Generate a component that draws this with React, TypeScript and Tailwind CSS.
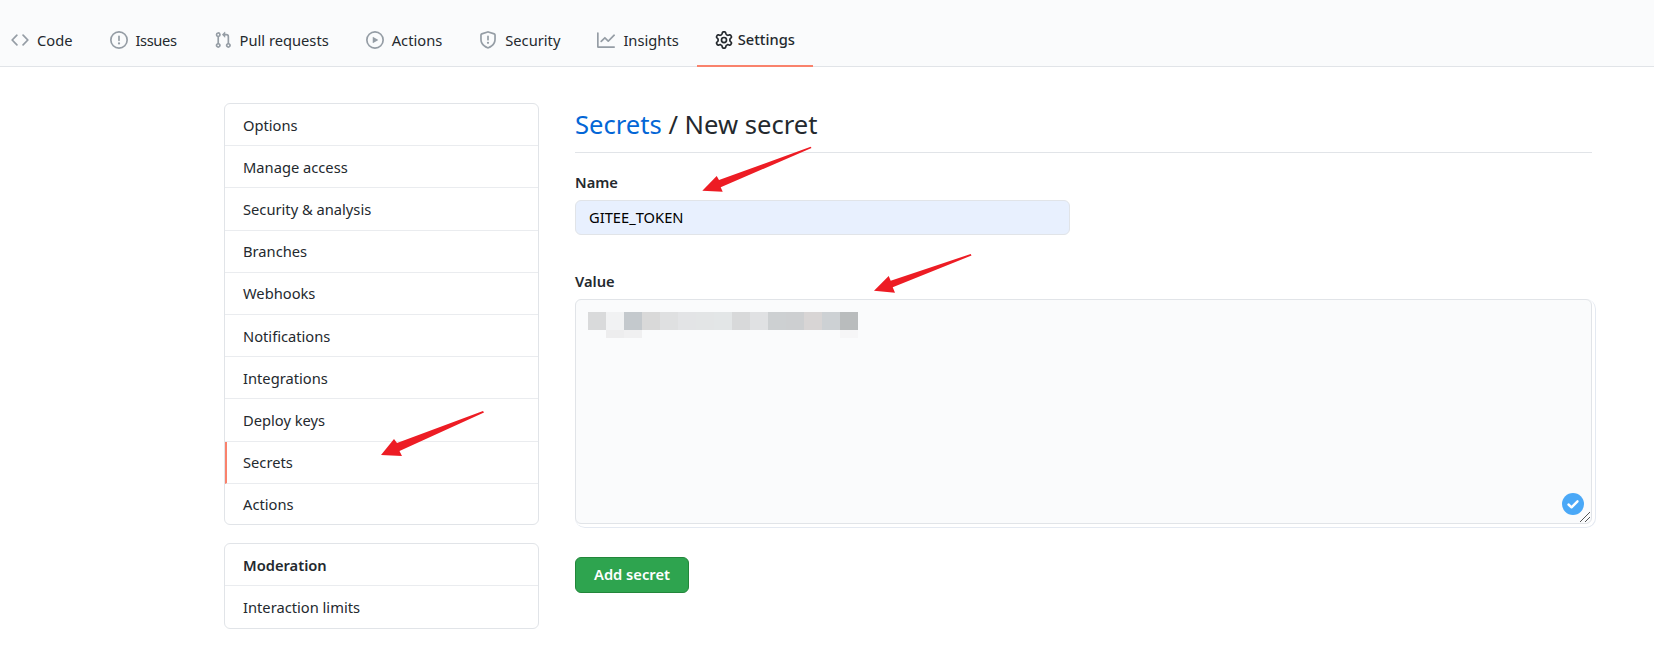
import React from 'react';

const icons: Record<string, string> = {
  code: 'M4.72 3.22a.75.75 0 011.06 1.06L2.06 8l3.72 3.72a.75.75 0 11-1.06 1.06L.47 8.53a.75.75 0 010-1.06l4.25-4.25zm6.56 0a.75.75 0 10-1.06 1.06L13.94 8l-3.72 3.72a.75.75 0 101.06 1.06l4.25-4.25a.75.75 0 000-1.06l-4.25-4.25z',
  issue: 'M8 1.5a6.5 6.5 0 100 13 6.5 6.5 0 000-13zM0 8a8 8 0 1116 0A8 8 0 010 8zm9 3a1 1 0 11-2 0 1 1 0 012 0zm-.25-6.25a.75.75 0 00-1.5 0v3.5a.75.75 0 001.5 0v-3.5z',
  pull: 'M7.177 3.073L9.573.677A.25.25 0 0110 .854v4.792a.25.25 0 01-.427.177L7.177 3.427a.25.25 0 010-.354zM3.75 2.5a.75.75 0 100 1.5.75.75 0 000-1.5zm-2.25.75a2.25 2.25 0 113 2.122v5.256a2.251 2.251 0 11-1.5 0V5.372A2.25 2.25 0 011.5 3.25zM11 2.5h-1V4h1a1 1 0 011 1v5.628a2.251 2.251 0 101.5 0V5A2.5 2.5 0 0011 2.5zm1 10.25a.75.75 0 111.5 0 .75.75 0 01-1.5 0zM3.75 12a.75.75 0 100 1.5.75.75 0 000-1.5z',
  play: 'M1.5 8a6.5 6.5 0 1113 0 6.5 6.5 0 01-13 0zM8 0a8 8 0 100 16A8 8 0 008 0zM6.379 5.227A.25.25 0 006 5.442v5.117a.25.25 0 00.379.214l4.264-2.559a.25.25 0 000-.428L6.379 5.227z',
  shield: 'M7.467.133a1.75 1.75 0 011.066 0l5.25 1.68A1.75 1.75 0 0115 3.48V7c0 1.566-.32 3.182-1.303 4.682-.983 1.498-2.585 2.813-5.032 3.855a1.7 1.7 0 01-1.33 0c-2.447-1.042-4.049-2.357-5.032-3.855C1.32 10.182 1 8.566 1 7V3.48a1.75 1.75 0 011.217-1.667l5.25-1.68zm.61 1.429a.25.25 0 00-.153 0l-5.25 1.68a.25.25 0 00-.174.238V7c0 1.358.275 2.666 1.057 3.86.784 1.194 2.121 2.34 4.366 3.297a.2.2 0 00.154 0c2.245-.956 3.582-2.104 4.366-3.298C13.225 9.666 13.5 8.36 13.5 7V3.48a.25.25 0 00-.174-.237l-5.25-1.68zM9 10.5a1 1 0 11-2 0 1 1 0 012 0zm-.25-5.75a.75.75 0 10-1.5 0v3a.75.75 0 001.5 0v-3z',
  graph: 'M1.5 1.75a.75.75 0 00-1.5 0v12.5c0 .414.336.75.75.75h14.5a.75.75 0 000-1.5H1.5V1.75zm14.28 2.53a.75.75 0 00-1.06-1.06L10 7.94 7.53 5.47a.75.75 0 00-1.06 0L3.22 8.72a.75.75 0 001.06 1.06L7 7.06l2.47 2.47a.75.75 0 001.06 0l5.25-5.25z',
  gear: 'M7.429 1.525a6.593 6.593 0 011.142 0c.036.003.108.036.137.146l.289 1.105c.147.56.55.967.997 1.189.174.086.341.183.501.29.417.278.97.423 1.53.27l1.102-.303c.11-.03.175.016.195.046.219.31.41.641.573.989.014.031.022.11-.059.19l-.815.806c-.411.406-.562.957-.53 1.456a4.588 4.588 0 010 .582c-.032.499.119 1.05.53 1.456l.815.806c.08.08.073.159.059.19a6.494 6.494 0 01-.573.99c-.02.029-.086.074-.195.045l-1.103-.303c-.559-.153-1.112-.008-1.529.27-.16.107-.327.204-.5.29-.449.222-.851.628-.998 1.189l-.289 1.105c-.029.11-.101.143-.137.146a6.613 6.613 0 01-1.142 0c-.036-.003-.108-.037-.137-.146l-.289-1.105c-.147-.56-.55-.967-.997-1.189a4.502 4.502 0 01-.501-.29c-.417-.278-.97-.423-1.53-.27l-1.102.303c-.11.03-.175-.016-.195-.046a6.492 6.492 0 01-.573-.989c-.014-.031-.022-.11.059-.19l.815-.806c.411-.406.562-.957.53-1.456a4.587 4.587 0 010-.582c.032-.499-.119-1.05-.53-1.456l-.815-.806c-.08-.08-.073-.159-.059-.19a6.44 6.44 0 01.573-.99c.02-.029.086-.075.195-.045l1.103.303c.559.153 1.112.008 1.529-.27.16-.107.327-.204.5-.29.449-.222.851-.628.998-1.189l.289-1.105c.029-.11.101-.143.137-.146zM8 0c-.236 0-.47.01-.701.03-.743.065-1.29.615-1.458 1.261l-.29 1.106c-.017.066-.078.158-.211.224a5.994 5.994 0 00-.668.386c-.123.082-.233.09-.3.071L3.27 2.776c-.644-.177-1.392.02-1.82.63a7.977 7.977 0 00-.704 1.217c-.315.675-.111 1.422.363 1.891l.815.806c.05.048.098.147.088.294a6.084 6.084 0 000 .772c.01.147-.038.246-.088.294l-.815.806c-.474.469-.678 1.216-.363 1.891.2.428.436.835.704 1.218.428.609 1.176.806 1.82.63l1.103-.303c.066-.019.176-.011.299.071.213.143.436.272.668.386.133.066.194.158.212.224l.289 1.106c.169.646.715 1.196 1.458 1.26a8.094 8.094 0 001.402 0c.743-.064 1.29-.614 1.458-1.26l.29-1.106c.017-.066.078-.158.211-.224a5.98 5.98 0 00.668-.386c.123-.082.233-.09.3-.071l1.102.302c.644.177 1.392-.02 1.82-.63.268-.382.505-.789.704-1.217.315-.675.111-1.422-.364-1.891l-.814-.806c-.05-.048-.098-.147-.088-.294a6.1 6.1 0 000-.772c-.01-.147.039-.246.088-.294l.814-.806c.475-.469.679-1.216.364-1.891a7.992 7.992 0 00-.704-1.218c-.428-.609-1.176-.806-1.82-.63l-1.103.303c-.066.019-.176.011-.299-.071a5.991 5.991 0 00-.668-.386c-.133-.066-.194-.158-.212-.224L10.16 1.29C9.99.645 9.444.095 8.701.031A8.094 8.094 0 008 0zm1.5 8a1.5 1.5 0 11-3 0 1.5 1.5 0 013 0zM11 8a3 3 0 11-6 0 3 3 0 016 0z',
};

const tabs = [
  { label: 'Code', icon: 'code' },
  { label: 'Issues', icon: 'issue' },
  { label: 'Pull requests', icon: 'pull' },
  { label: 'Actions', icon: 'play' },
  { label: 'Security', icon: 'shield' },
  { label: 'Insights', icon: 'graph' },
];

const menu = ['Options', 'Manage access', 'Security & analysis', 'Branches', 'Webhooks', 'Notifications', 'Integrations', 'Deploy keys', 'Secrets', 'Actions'];

// pixelated token in the value box
const blur = ['#d9dadb', '#f1f2f3', '#c4c9cd', '#d9d9d9', '#dfe0e1', '#e3e4e6', '#e3e5e6', '#e3e6e7', '#d8d9da', '#e0e1e3', '#cdd0d2', '#cdcfd1', '#d8d5d5', '#cdd1d4', '#b9bcbd'];

const Octicon = ({ name, className }: { name: string; className: string }) => (
  <svg viewBox="0 0 16 16" fill="currentColor" className={className}>
    <path fillRule="evenodd" d={icons[name]} />
  </svg>
);

const App: React.FC = () => {
  return (
    <div className="relative h-[658px] overflow-hidden bg-white text-[14.7px] text-[#24292e] font-['Noto_Sans',sans-serif]">
      <nav className="h-[67px] bg-[#fafbfc] border-b border-[#e1e4e8] flex pl-[11px]">
        {tabs.map((t) => (
          <a key={t.label} className={`flex items-center pt-[14px] mr-[37px] ${t.label === 'Issues' ? 'tracking-[-0.4px]' : ''}`}>
            <Octicon name={t.icon} className="w-[18px] h-[18px] mr-[8px] text-[#959da5]" />
            {t.label}
          </a>
        ))}
        <a className="flex items-center h-[67px] pt-[14px] -ml-[19px] px-[18px] border-b-2 border-[#f9826c] font-medium">
          <Octicon name="gear" className="w-[18px] h-[18px] mr-[5px] text-[#24292e]" />
          Settings
        </a>
      </nav>

      <div className="flex pl-[224px] pt-[36px]">
        <aside className="w-[315px] shrink-0">
          <div className="border border-[#e1e4e8] rounded-[6px] overflow-hidden">
            {menu.map((m, i) => (
              <div key={m} className={`h-[42.2px] last:h-[40.2px] flex items-center pr-[18px] ${i < menu.length - 1 ? 'border-b border-[#eaecef]' : 'pt-[1px]'} ${m === 'Secrets' ? 'border-l-2 border-l-[#f9826c] pl-[16px]' : 'pl-[18px]'}`}>
                {m}
              </div>
            ))}
          </div>
          <div className="mt-[18px] border border-[#e1e4e8] rounded-[6px] overflow-hidden">
            <div className="h-[42px] flex items-center px-[18px] pt-[1px] border-b border-[#eaecef] font-semibold">Moderation</div>
            <div className="h-[42px] flex items-center px-[18px]">Interaction limits</div>
          </div>
        </aside>

        <main className="ml-[36px] w-[1017px]">
          <h2 className="h-[50px] border-b border-[#e1e4e8] text-[25.6px] leading-[44px]">
            <span className="text-[#0366d6]">Secrets</span> / New secret
          </h2>
          <label className="block mt-[19px] mb-[8px] font-semibold leading-[20px]">Name</label>
          <div className="w-[495px] h-[35px] rounded-[6px] border border-[#e1e4e8] bg-[#e8f0fe] flex items-center px-[13px] text-black">GITEE_TOKEN</div>
          <label className="block mt-[36px] mb-[8px] font-semibold leading-[20px]">Value</label>
          {/* faint second outline from the screenshot, right and bottom only */}
          <div className="w-[1021px] rounded-[10px] border-r border-b border-[#e4e9f1] pr-[3px] pb-[3px]">
            <div className="relative h-[225px] rounded-[6px] border border-[#e1e4e8] bg-[#fafbfc] p-[12px]">
              <div className="flex">
                {blur.map((c, i) => (
                  <span key={i} className="w-[18px] h-[18px]" style={{ backgroundColor: c }} />
                ))}
              </div>
              <div className="flex pl-[18px]">
                <span className="w-[18px] h-[8px] bg-[#ededee]" />
                <span className="w-[18px] h-[8px] bg-[#f0f0f1]" />
                <span className="ml-[198px] w-[18px] h-[8px] bg-[#f6f6f7]" />
              </div>
              {/* validation badge + resize grip */}
              <span className="absolute right-[7px] bottom-[8px] w-[22px] h-[22px] rounded-full bg-[#4aa8f7] flex items-center justify-center">
                <svg viewBox="0 0 22 22" className="w-[22px] h-[22px]" fill="none" stroke="white" strokeWidth="2.4" strokeLinecap="round" strokeLinejoin="round">
                  <path d="M6.5 11.5l3 2.8 6-6" />
                </svg>
              </span>
              <svg viewBox="0 0 11 11" className="absolute right-[1px] bottom-[1px] w-[11px] h-[11px]" stroke="#555" strokeWidth="1">
                <path d="M1 11L11 1M6 11l5-5" />
              </svg>
            </div>
          </div>
          <button className="mt-[29px] w-[114px] h-[36px] pb-[1px] rounded-[6px] border border-[#22863a] bg-[#2ea44f] text-white font-semibold">Add secret</button>
        </main>
      </div>

      {/* red annotation arrows */}
      <svg className="absolute inset-0 pointer-events-none" width="1654" height="658" fill="#ed1c24">
        <polygon points="810.7,146.7 719,180 716.7,176 702.3,190.7 722.7,191.7 720.7,187.3 811.5,148" />
        <polygon points="970.7,254 890.7,280.7 888.7,276 874,290.7 895,292.7 892.7,287.3 971.5,255.5" />
        <polygon points="483,411 397,443 394,439 381,455 402,456 399.5,451 484,412.5" />
      </svg>
    </div>
  );
};

export default App;
